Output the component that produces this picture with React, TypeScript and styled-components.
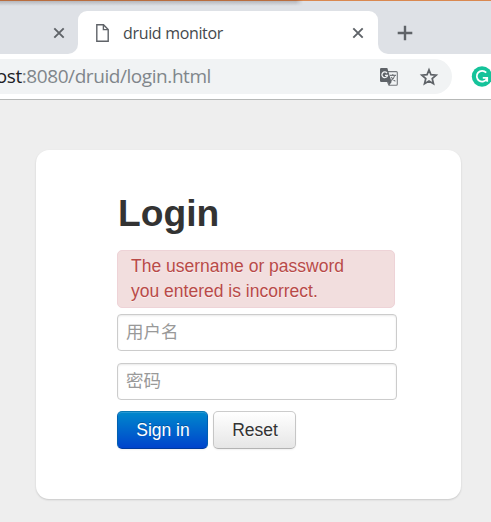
import React from "react";
import styled, { createGlobalStyle } from "styled-components";

const GlobalStyle = createGlobalStyle`
  * { box-sizing: border-box; }
  body { margin: 0; background: #eee; overflow: hidden; }
`;

const Window = styled.div`
  width: 491px;
  height: 522px;
  display: flex;
  flex-direction: column;
  overflow: hidden;
  background: #eee;
  font-family: "Liberation Sans", "Noto Sans CJK SC", sans-serif;
`;

const TabStrip = styled.div`
  position: relative;
  display: flex;
  height: 54px;
  flex: none;
  background: #fff;
`;

const WindowEdge = styled.div`
  position: absolute;
  inset: 0 0 auto 0;
  height: 1px;
  background: #d98850;
`;

const WindowShadow = styled.div`
  position: absolute;
  top: 0;
  left: 0;
  width: 303px;
  height: 6px;
  border-top: 1px solid #b96d3f;
  background: linear-gradient(#b5b6bb, #dee1e6);
  -webkit-mask-image: linear-gradient(to right, #000 296px, transparent);
`;

const StripSide = styled.div<{ $side: "left" | "right" }>`
  display: flex;
  align-items: center;
  padding-top: 11px;
  background: #dee1e6;
  ${(p) =>
    p.$side === "left"
      ? "width: 78px; padding-left: 53px; border-bottom-right-radius: 10px;"
      : "flex: 1; padding-left: 19px; border-bottom-left-radius: 10px;"}
`;

const TabSlot = styled.div`
  width: 300px;
  padding-top: 11px;
  background: #dee1e6;
`;

const ActiveTab = styled.div`
  display: flex;
  align-items: center;
  height: 43px;
  padding: 0 14px 0 18px;
  border-radius: 9px 9px 0 0;
  background: #fff;
`;

const TabTitle = styled.span`
  flex: 1;
  margin-left: 14px;
  color: #45494d;
  font: 16px/22px "Open Sans", sans-serif;
  letter-spacing: -0.33px;
  white-space: nowrap;
`;

const Icon = styled.svg`
  display: block;
  flex: none;
  overflow: visible;
`;

const Toolbar = styled.div`
  display: flex;
  align-items: center;
  flex: none;
  height: 46px;
  background: #fff;
  border-bottom: 1px solid #b6b8b7;
`;

const Omnibox = styled.div`
  display: flex;
  align-items: center;
  width: 452px;
  height: 35px;
  padding-right: 14px;
  border-radius: 0 18px 18px 0;
  background: #f1f3f4;
`;

const Address = styled.div`
  display: flex;
  justify-content: flex-end;
  width: 211px;
  margin-right: 169px;
  padding-bottom: 2px;
  color: #80868b;
  font: 19px/30px "Open Sans", sans-serif;
  letter-spacing: -0.43px;
  white-space: nowrap;
`;

const Host = styled.span`
  color: #202124;
`;

const ToolIcon = styled(Icon)<{ $gap: number }>`
  margin-left: ${(p) => p.$gap}px;
`;

const Page = styled.main`
  flex: 1;
  padding: 50px 30px 0 36px;
`;

const Card = styled.section`
  height: 349px;
  padding: 38px 64px 0 81px;
  border-radius: 13px;
  background: #fff;
  box-shadow: 0 1px 2px rgba(0, 0, 0, 0.16);
`;

const Heading = styled.h2`
  margin: 0 0 12px 1px;
  color: #333;
  font-size: 37.2px;
  line-height: 50px;
  font-weight: 700;
`;

const Alert = styled.div`
  width: 278px;
  height: 58px;
  padding: 3px 13px;
  border: 1px solid #eed3d7;
  border-radius: 5px;
  background: #f2dede;
  color: #b94a48;
  font-size: 17.5px;
  line-height: 25px;
  text-shadow: 0 1px 0 rgba(255, 255, 255, 0.5);
`;

const Field = styled.input<{ $top: number }>`
  display: block;
  width: 280px;
  height: 37px;
  margin: ${(p) => p.$top}px 0 0;
  padding: 0 8px;
  border: 1px solid #ccc;
  border-radius: 4px;
  outline: none;
  background: #fff;
  box-shadow: inset 0 1px 2px rgba(0, 0, 0, 0.09);
  font: 17.5px "Liberation Sans", "Noto Sans CJK SC", sans-serif;
  &::placeholder { color: #999; opacity: 1; }
`;

const Actions = styled.div`
  display: flex;
  gap: 5px;
  margin-top: 11px;
`;

const Button = styled.button<{ $primary?: boolean }>`
  width: ${(p) => (p.$primary ? 91 : 83)}px;
  height: 38px;
  padding: 0 0 0 1px;
  border: 1px solid;
  border-radius: 5px;
  font: 17.5px/25px "Liberation Sans", sans-serif;
  ${(p) =>
    p.$primary
      ? `color: #fff;
         border-color: #0878b5 #0060b0 #003a9c;
         background: linear-gradient(#0088cc, #0044cc);
         text-shadow: 0 -1px 0 rgba(0, 0, 0, .25);
         box-shadow: inset 0 1px 0 rgba(255, 255, 255, .15), 0 1px 2px rgba(0, 0, 0, .06);`
      : `color: #333;
         border-color: #ccc #c6c6c6 #b3b3b3;
         background: linear-gradient(#fff, #e6e6e6);
         text-shadow: 0 1px 1px rgba(255, 255, 255, .75);
         box-shadow: 0 1px 2px rgba(0, 0, 0, .06);`}
`;

const CloseIcon = () => (
  <Icon width="12" height="12" viewBox="0 0 12 12" stroke="#5f6368" strokeWidth="1.9">
    <path d="M1.3 1.3 10.7 10.7M10.7 1.3 1.3 10.7" />
  </Icon>
);

const PageIcon = () => (
  <Icon width="13" height="18" viewBox="0 0 13 18" fill="none" stroke="#5f6368" strokeWidth="1.4">
    <path d="M.8.8H7.5L12.2 5.5V17.2H.8ZM7.4.8V5.6H12.2" />
  </Icon>
);

const PlusIcon = () => (
  <Icon width="16" height="16" viewBox="0 0 16 16" stroke="#5f6368" strokeWidth="2.4">
    <path d="M8 .7V15.3M.7 8H15.3" />
  </Icon>
);

const TranslateIcon = () => (
  <ToolIcon $gap={0} width="18" height="18" viewBox="0 0 18 18" fill="none">
    <path d="M8 3.6H16.3Q17.3 3.6 17.3 4.6V16.3Q17.3 17.3 16.3 17.3H9L7.5 14" stroke="#74787c" strokeWidth="1.1" />
    <path d="M1.2 0H7.3L11.6 14H1.2Q0 14 0 12.8V1.2Q0 0 1.2 0Z" fill="#5f6368" />
    <path d="M8 14H11.6L9 17.4Z" fill="#5f6368" />
    <path d="M7 5.1A2.8 2.8 0 1 0 7.5 7.3H5" stroke="#f1f3f4" strokeWidth="1.3" />
    <path d="M10 7.4H16M12.8 6V7.4M14.7 7.6Q13.7 11 10.9 12.8M11.3 9Q12.7 12 15.4 13.3" stroke="#74787c" strokeWidth="1.1" />
  </ToolIcon>
);

const StarIcon = () => (
  <ToolIcon $gap={22} width="18" height="18" viewBox="0 0 18 18" fill="none">
    <path d="M9 1.8 10.9 6.6 16.2 7.1 12.2 10.5 13.5 15.8 9 13 4.5 15.8 5.8 10.5 1.8 7.1 7.1 6.6Z" stroke="#5f6368" strokeWidth="1.7" />
  </ToolIcon>
);

const GrammarIcon = () => (
  <ToolIcon $gap={20} width="20" height="20" viewBox="0 0 20 20" fill="none">
    <circle cx="10" cy="9.5" r="10.2" fill="#15c39a" />
    <path d="M14.2 5.6A5.4 5.4 0 1 0 15 11.6M10.8 10.8H15.2V14.8" stroke="#fff" strokeWidth="1.8" />
  </ToolIcon>
);

export default function App() {
  return (
    <>
      <GlobalStyle />
      <Window>
        <TabStrip>
          <StripSide $side="left"><CloseIcon /></StripSide>
          <TabSlot>
            <ActiveTab>
              <PageIcon />
              <TabTitle>druid monitor</TabTitle>
              <CloseIcon />
            </ActiveTab>
          </TabSlot>
          <StripSide $side="right"><PlusIcon /></StripSide>
          <WindowEdge />
          <WindowShadow />
        </TabStrip>
        <Toolbar>
          <Omnibox>
            <Address><Host>ost</Host>:8080/druid/login.html</Address>
            <TranslateIcon />
            <StarIcon />
          </Omnibox>
          <GrammarIcon />
        </Toolbar>
        <Page>
          <Card>
            <Heading>Login</Heading>
            <Alert>The username or password<br />you entered is incorrect.</Alert>
            <Field $top={6} type="text" placeholder="用户名" />
            <Field $top={12} type="password" placeholder="密码" />
            <Actions>
              <Button $primary type="button">Sign in</Button>
              <Button type="button">Reset</Button>
            </Actions>
          </Card>
        </Page>
      </Window>
    </>
  );
}
